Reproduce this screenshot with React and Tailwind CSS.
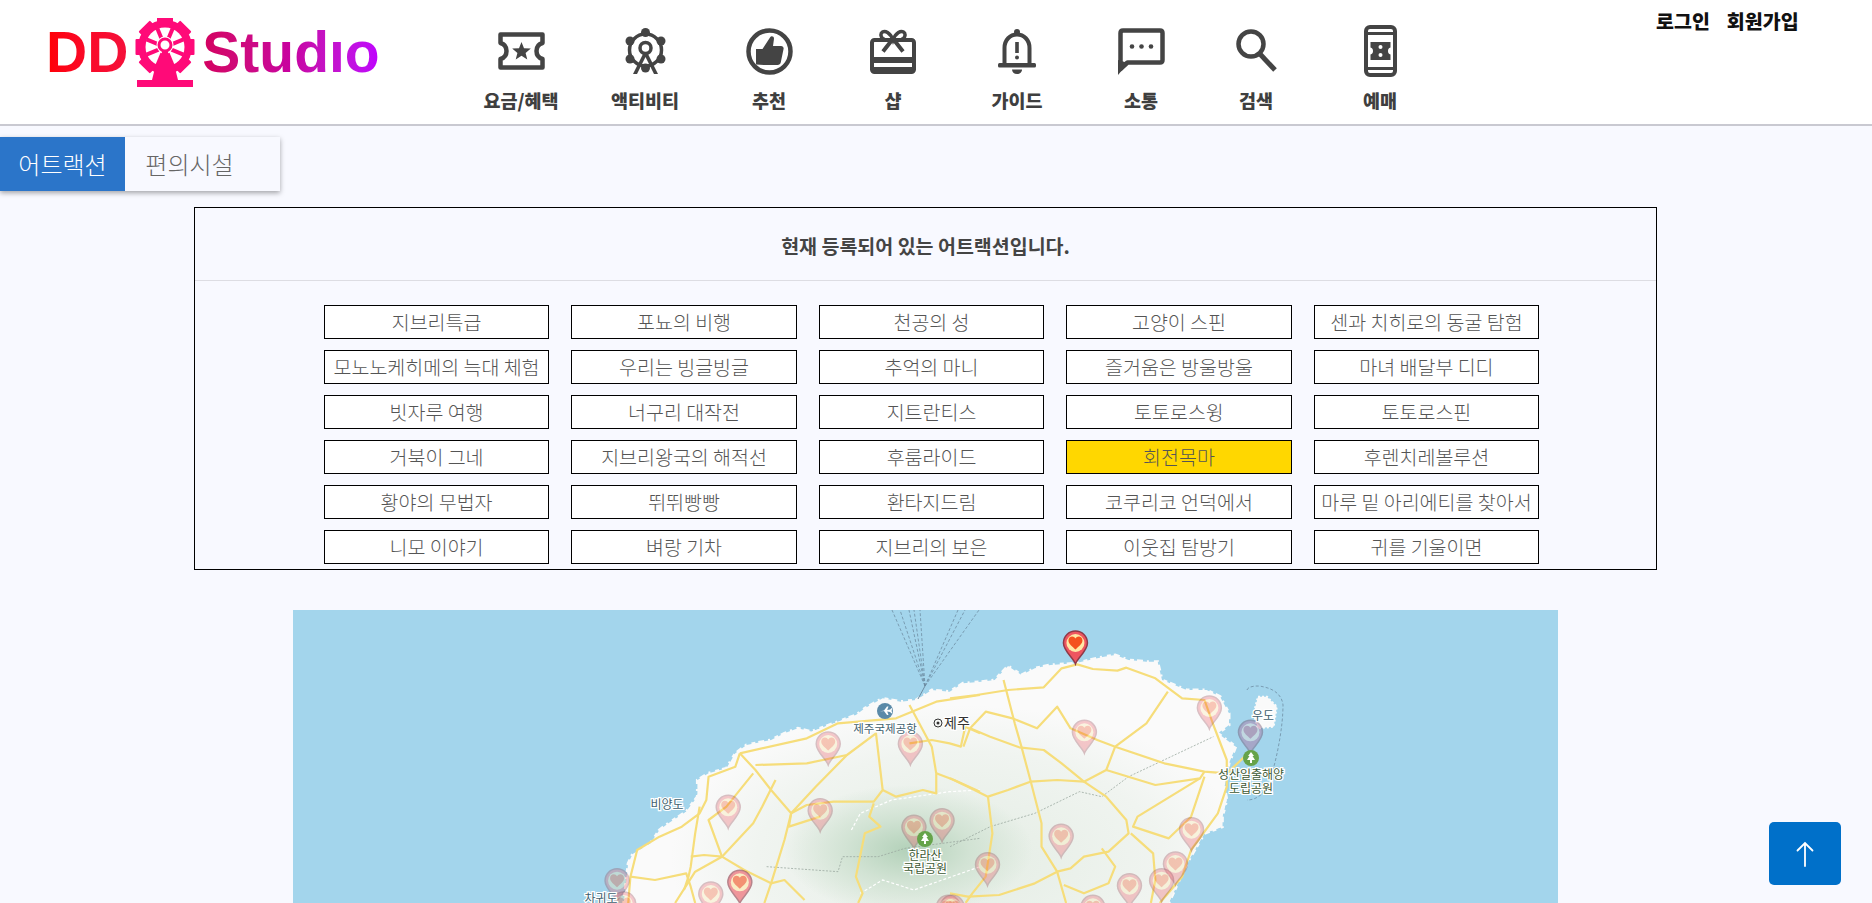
import React from 'react';

const KR = 'font-["Noto_Sans_CJK_KR","Noto_Sans",sans-serif]';

const ICON = '#444444';

const TicketIcon = () => (
    <svg width="47" height="38" viewBox="0 0 47 38">
        <path d="M2.500 2.500h42v8.500c-4 1.200-6 4.500-6 8s2 6.800 6 8v8.500h-42v-8.500c4-1.200 6-4.500 6-8s-2-6.800-6-8z" fill="none" stroke={ICON} strokeWidth="4.500" strokeLinejoin="round" />
        <path d="M23.500 10l2.500 6.200 6.800.4-5.200 4.300 1.700 6.600-5.800-3.700-5.800 3.700 1.700-6.600-5.200-4.300 6.800-.4z" fill={ICON} />
    </svg>
);

const WheelIcon = () => (
    <svg width="43" height="46" viewBox="0 0 43 46">
        <circle cx="21.500" cy="22" r="16" fill="none" stroke={ICON} strokeWidth="3.500" />
        {[[21.500, 4.500], [37, 13], [37, 31], [21.500, 40], [6, 31], [6, 13]].map(([x, y]) => (
            <circle key={x + '-' + y} cx={x} cy={y} r="4.500" fill={ICON} />
        ))}
        <circle cx="21.500" cy="20" r="5.500" fill="none" stroke={ICON} strokeWidth="3.500" />
        <path d="M19 26L9 46h4l8.500-17L30 46h4L24 26z" fill={ICON} />
    </svg>
);

const ThumbIcon = () => (
    <svg width="47" height="47" viewBox="0 0 47 47">
        <circle cx="23.500" cy="23.500" r="21" fill="none" stroke={ICON} strokeWidth="4.500" />
        <path d="M10 21h6.500L24 9.500c1.200-2 4-1.200 4 1.200L27 18h8c2 0 3 1.500 2.500 3.200l-2.700 13c-.4 1.800-1.500 2.800-3.300 2.800H18l-8-.5z" fill={ICON} />
    </svg>
);

const GiftIcon = () => (
    <svg width="46" height="45" viewBox="0 0 46 45">
        <rect x="2" y="11" width="42" height="32" rx="2.500" fill="none" stroke={ICON} strokeWidth="4" />
        <rect x="2" y="28" width="42" height="6" fill={ICON} />
        <rect x="2" y="38" width="42" height="6" rx="2" fill={ICON} />
        <path d="M23 11c-3-8-8-9.500-10.500-8s-2 6 2 7.500L23 12c3.500-1 6-1 8.500-1.500 4-1.500 4.500-6 2-7.500S26 3 23 11z" fill="none" stroke={ICON} strokeWidth="3.500" />
        <path d="M22 11l-9 11.500M24 11l9 11.500" stroke={ICON} strokeWidth="4" />
    </svg>
);

const BellIcon = () => (
    <svg width="38" height="47" viewBox="0 0 38 47">
        <circle cx="19" cy="4" r="3" fill={ICON} />
        <path d="M6.500 36V20C6.500 12 12 6.500 19 6.500S31.500 12 31.500 20v16" fill="none" stroke={ICON} strokeWidth="4" />
        <rect y="35" width="38" height="4.500" rx="1.500" fill={ICON} />
        <rect x="17.200" y="14" width="3.600" height="11" fill={ICON} />
        <circle cx="19" cy="29.500" r="2" fill={ICON} />
        <path d="M14 41.500h10c0 2.500-2 4.500-5 4.500s-5-2-5-4.500z" fill={ICON} />
    </svg>
);

const ChatIcon = () => (
    <svg width="47" height="47" viewBox="0 0 47 47">
        <path d="M2.500 41V5c0-1.500 1-2.500 2.500-2.500h37c1.500 0 2.500 1 2.500 2.500v27c0 1.500-1 2.500-2.500 2.500H9.500z" fill="none" stroke={ICON} strokeWidth="4.500" strokeLinejoin="round" />
        <path d="M0 47V32l10 3z" fill={ICON} />
        <circle cx="14" cy="18.500" r="2.300" fill={ICON} />
        <circle cx="23.500" cy="18.500" r="2.300" fill={ICON} />
        <circle cx="33" cy="18.500" r="2.300" fill={ICON} />
    </svg>
);

const SearchIcon = () => (
    <svg width="41" height="44" viewBox="0 0 41 44">
        <circle cx="15" cy="15" r="12.500" fill="none" stroke={ICON} strokeWidth="4.500" />
        <path d="M24 25l15 16" stroke={ICON} strokeWidth="5" />
    </svg>
);

const PhoneIcon = () => (
    <svg width="33" height="52" viewBox="0 0 33 52">
        <rect x="2" y="2" width="29" height="48" rx="4" fill="none" stroke={ICON} strokeWidth="4" />
        <rect x="2" y="7" width="29" height="3" fill={ICON} />
        <rect x="2" y="42" width="29" height="3" fill={ICON} />
        <path d="M6.500 17h20v5.500c-1.800.5-2.500 1.800-2.500 3.500s.7 3 2.500 3.500V35h-20v-5.500C8.300 29 9 27.700 9 26s-.7-3-2.500-3.500z" fill={ICON} />
        <circle cx="16.500" cy="22" r="2" fill="#ffffff" />
        <circle cx="16.500" cy="30" r="2" fill="#ffffff" />
    </svg>
);

const LOGO_ANGLES = [0, 45, 90, 135, 180, 225, 270, 315];

const LogoWheel = () => (
    <svg width="66" height="69" viewBox="0 0 66 69" className="shrink-0">
        <circle cx="33" cy="29" r="27" fill="#ff0a78" />
        {LOGO_ANGLES.map((deg) => (
            <rect key={deg} x="25" y="-0.500" width="16" height="10" rx="1" fill="#ff0a78" transform={`rotate(${deg} 33 29)`} />
        ))}
        <circle cx="33" cy="29" r="19.500" fill="#ffffff" />
        {LOGO_ANGLES.map((deg) => (
            <path key={deg} d="M33 9v13" stroke="#ff0a78" strokeWidth="4" transform={`rotate(${deg + 22.500} 33 29)`} />
        ))}
        <circle cx="33" cy="27" r="8.500" fill="#ffffff" />
        <circle cx="33" cy="27" r="6" fill="none" stroke="#ff0a78" strokeWidth="3" />
        <path d="M31 32h4l8 18 3 12H20l3-12z" fill="#ff0a78" />
        <rect x="5" y="62" width="56" height="7" fill="#ff0a78" />
    </svg>
);

const NAV = [
    { label: '요금/혜택', Icon: TicketIcon, width: 'w-[124px]' },
    { label: '액티비티', Icon: WheelIcon, width: 'w-[124px]' },
    { label: '추천', Icon: ThumbIcon, width: 'w-[124px]' },
    { label: '샵', Icon: GiftIcon, width: 'w-[124px]' },
    { label: '가이드', Icon: BellIcon, width: 'w-[124px]' },
    { label: '소통', Icon: ChatIcon, width: 'w-[124px]' },
    { label: '검색', Icon: SearchIcon, width: 'w-[106px]' },
    { label: '예매', Icon: PhoneIcon, width: 'w-[142px]' },
];

const ATTRACTIONS = [
    '지브리특급', '포뇨의 비행', '천공의 성', '고양이 스핀', '센과 치히로의 동굴 탐험',
    '모노노케히메의 늑대 체험', '우리는 빙글빙글', '추억의 마니', '즐거움은 방울방울', '마녀 배달부 디디',
    '빗자루 여행', '너구리 대작전', '지트란티스', '토토로스윙', '토토로스핀',
    '거북이 그네', '지브리왕국의 해적선', '후룸라이드', '회전목마', '후렌치레볼루션',
    '황야의 무법자', '뛰뛰빵빵', '환타지드림', '코쿠리코 언덕에서', '마루 밑 아리에티를 찾아서',
    '니모 이야기', '벼랑 기차', '지브리의 보은', '이웃집 탐방기', '귀를 기울이면',
];

// map points are read off two crops of the picture, so convert them to page space
const a = ([x, y]) => [280 + x / 2.24, 600 + y / 3];
const b = ([x, y]) => [950 + x / 2.24, 600 + y / 3];
const line = (pts) => pts.map((p) => p.join(',')).join(' ');

const LAND = [
    ...[[770, 909], [780, 790], [790, 762], [830, 730], [850, 690], [870, 670], [910, 635], [935, 590], [935, 540], [960, 520], [1000, 505], [1020, 460], [1045, 435], [1100, 420], [1130, 400], [1160, 385], [1190, 395], [1250, 365], [1290, 345], [1310, 325], [1350, 295], [1390, 305], [1425, 300], [1460, 270], [1500, 275], [1530, 250]].map(a),
    ...[[70, 245], [100, 240], [130, 198], [160, 225], [190, 205], [225, 195], [280, 190], [345, 170], [370, 165], [400, 180], [440, 185], [465, 185], [475, 240], [530, 270], [575, 270], [605, 290], [625, 340], [625, 375], [600, 400], [640, 440], [625, 490], [615, 560], [620, 600], [610, 650], [610, 680], [570, 700], [535, 780], [510, 850], [500, 880], [490, 909]].map(b),
];

const UDO = [[690, 290], [710, 290], [732, 320], [725, 380], [690, 385], [680, 340]].map(b);

const ROADS = [
    [[1030, 460], [1180, 415], [1250, 370], [1380, 355], [1470, 305], [1568, 285]].map(a),
    [[1030, 460], [1065, 510], [1100, 570], [1145, 640], [1130, 720], [1100, 850], [1085, 909]].map(a),
    [[1065, 495], [1180, 490], [1270, 465], [1335, 400], [1350, 570], [1330, 605], [1240, 605], [1180, 615], [1145, 640], [1140, 680], [1210, 650]].map(a),
    [[1270, 465], [1200, 560], [1145, 640]].map(a),
    [[1060, 520], [1000, 620], [960, 660], [990, 770], [1040, 810], [1100, 850], [1130, 840], [1175, 900]].map(a),
    [[1110, 540], [1080, 620], [1060, 670], [990, 770], [930, 815], [885, 909]].map(a),
    [[940, 620], [930, 700], [920, 800], [915, 830], [905, 870]].map(a),
    [[920, 770], [950, 765], [990, 770]].map(a),
    [[1030, 460], [1020, 500], [960, 530], [955, 600], [940, 640], [900, 680], [850, 710], [800, 750], [785, 830], [780, 909]].map(a),
    [[785, 830], [840, 840], [910, 820], [920, 860], [930, 909]].map(a),
    [[1350, 570], [1380, 590], [1440, 570], [1470, 580], [1470, 520], [1460, 440], [1410, 315]].map(a),
    [[1470, 520], [1510, 540], [1568, 575]].map(a),
    [[1330, 610], [1320, 650], [1345, 680], [1310, 700], [1290, 830], [1305, 880], [1295, 909]].map(a),
    [[1410, 430], [1460, 420], [1500, 430], [1525, 440], [1535, 380], [1568, 400]].map(a),
    [[0, 295], [60, 285], [130, 270], [210, 262], [250, 205], [285, 193], [320, 207], [375, 212], [395, 203], [460, 235], [520, 295], [570, 300], [590, 375], [620, 480], [620, 560], [600, 640], [540, 750], [520, 830], [470, 909]].map(b),
    [[0, 535], [40, 560], [85, 590], [130, 570], [180, 545], [240, 540], [300, 545], [350, 510], [370, 440]].map(b),
    [[120, 240], [145, 370], [160, 440], [180, 540], [205, 670], [205, 740], [240, 815], [260, 909]].map(b),
    [[85, 590], [95, 700], [80, 830], [50, 880], [35, 909]].map(b),
    [[45, 385], [90, 410], [155, 442], [210, 450], [250, 490], [300, 545], [350, 590], [395, 660], [400, 700], [355, 755], [300, 770], [270, 805], [240, 815], [190, 850], [110, 885], [40, 890], [0, 880]].map(b),
    [[30, 440], [45, 385], [80, 335], [140, 355], [195, 385], [240, 320], [270, 385], [330, 420], [370, 440], [480, 490], [570, 515], [620, 520], [660, 470]].map(b),
    [[370, 440], [440, 370], [488, 275]].map(b),
    [[350, 510], [460, 555], [560, 535], [570, 515]].map(b),
    [[560, 535], [420, 650], [410, 680], [490, 715], [540, 650], [570, 530]].map(b),
    [[405, 700], [455, 760], [460, 840], [450, 909]].map(b),
    [[340, 745], [370, 800], [355, 850], [300, 880], [255, 855]].map(b),
];

const TRAILS = [
    [[1090, 800], [1250, 815], [1260, 770], [1340, 770], [1400, 745], [1568, 715]].map(a),
    [[0, 740], [90, 680], [190, 640], [290, 575], [340, 590], [400, 530], [590, 410]].map(b),
];

const PARK = [
    [[1300, 880], [1350, 840], [1420, 870], [1568, 800]].map(a),
    [[1280, 690], [1300, 640], [1370, 600], [1500, 575], [1568, 570]].map(a),
];

const FERRY = [892, 900, 909, 914, 920, 958, 965, 979].map((x) => [[925, 686], [x, 610]]);

const PINS = [
    ...[[1228, 495], [1412, 495], [1004, 685], [1210, 695], [1420, 745], [1483, 725], [755, 905], [770, 975], [965, 945], [1497, 985]].map(a),
    ...[[301, 460], [581, 387], [249, 772], [541, 752], [505, 855], [84, 857], [402, 920], [474, 905], [320, 985], [5, 985]].map(b),
];

const Pin = ({ at: [x, y], className = 'opacity-30' }) => (
    <g transform={`translate(${x} ${y})`} className={className}>
        <path d="M0 0C-2-6-12-13-12-21A12 12 0 1 1 12-21C12-13 2-6 0 0Z" fill="#ee5560" stroke="#8f3a48" strokeWidth="1.500" />
        <circle cy="-21" r="9" fill="#ffe8a6" />
        <path d="M0-14.500C-3-17.500-7-20-7-23.500c0-2.500 1.800-4 3.700-4 1.500 0 2.500.8 3.300 2 .8-1.200 1.800-2 3.300-2 1.900 0 3.700 1.500 3.700 4 0 3.500-4 6-7 9z" fill="#f4511e" />
    </g>
);

const Tree = ({ x, y }) => (
    <g transform={`translate(${x} ${y})`}>
        <circle r="8" fill="#66a34a" />
        <path d="M0-6l3 4H1.500l2.500 4H1v3H-1V2H-4l2.500-4H-3z" fill="#ffffff" />
    </g>
);

const MapLabel = ({ x, y, size = 12, fill = '#3f5f6e', children }) => (
    <text
        x={x}
        y={y}
        fontSize={size}
        fill={fill}
        textAnchor="middle"
        stroke="#ffffff"
        strokeWidth="2.500"
        className={`${KR} [paint-order:stroke]`}
    >
        {children}
    </text>
);

const JejuMap = () => (
    <svg viewBox="293 610 1265 293" className="block h-[293px] w-[1265px]">
        <defs>
            <radialGradient id="plain">
                <stop offset="0%" stopColor="#e4ede4" />
                <stop offset="70%" stopColor="#f0f4f0" />
                <stop offset="100%" stopColor="#fafafa" />
            </radialGradient>
            <radialGradient id="peak">
                <stop offset="0%" stopColor="#b3d1b9" />
                <stop offset="50%" stopColor="#d2e3d4" />
                <stop offset="100%" stopColor="#d2e3d4" stopOpacity="0" />
            </radialGradient>
            <clipPath id="island">
                <polygon points={line(LAND)} />
            </clipPath>
        </defs>
        <rect x="293" y="610" width="1265" height="293" fill="#a3d5ec" />
        <polygon points={line(LAND)} fill="#fafafa" stroke="#fafafa" strokeWidth="3" strokeDasharray="2 5 4 3 6 4" />
        <polygon points={line(UDO)} fill="#fafafa" stroke="#fafafa" strokeWidth="2" strokeDasharray="2 2" />
        <g clipPath="url(#island)">
            <ellipse cx="960" cy="860" rx="290" ry="155" fill="url(#plain)" />
            <ellipse cx="908" cy="850" rx="125" ry="65" fill="url(#peak)" />
        </g>
        {FERRY.map((pts) => (
            <polyline key={pts[1][0]} points={line(pts)} fill="none" stroke="#6f8ea3" strokeWidth="0.800" strokeDasharray="3 2" />
        ))}
        <path d="M925 686l-7 13" stroke="#6f8ea3" strokeWidth="1" />
        <path d="M1247 690C1248 686 1258 685 1264 687C1274 689 1282 695 1283 705C1283 725 1278 755 1270 780C1266 792 1258 800 1247 800" fill="none" stroke="#6f8ea3" strokeWidth="0.800" strokeDasharray="3 2" />
        {TRAILS.map((pts, i) => (
            <polyline key={i} points={line(pts)} fill="none" stroke="#9aa8a0" strokeWidth="0.800" strokeDasharray="2 1.500" />
        ))}
        {PARK.map((pts, i) => (
            <polyline key={i} points={line(pts)} fill="none" stroke="#ffffff" strokeWidth="1.200" strokeDasharray="3 2" />
        ))}
        {ROADS.map((pts, i) => (
            <polyline key={i} points={line(pts)} fill="none" stroke="#f6dd7a" strokeWidth="2.200" strokeLinejoin="round" />
        ))}
        {PINS.map((p) => (
            <Pin key={p.join('-')} at={p} />
        ))}
        <Pin at={b([673, 460])} className="opacity-40 saturate-50 hue-rotate-[-40deg]" />
        <Pin at={a([1030, 910])} className="opacity-60" />
        <Pin at={b([281, 192])} className="opacity-100" />
        <circle cx="885" cy="711" r="8" fill="#5b8aa8" />
        <path d="M880 711.500l4-1 3-4h1.500l-1.300 3.500 3-.5 1-1.300h1l-.6 2.500.6 2.500h-1l-1-1.200-3-.5 1.300 3.500H887l-3-4z" fill="#ffffff" />
        <MapLabel x={885} y={733} size={11.500}>제주국제공항</MapLabel>
        <circle cx="938" cy="723" r="4" fill="none" stroke="#333333" strokeWidth="1" />
        <circle cx="938" cy="723" r="1.500" fill="#333333" />
        <MapLabel x={957} y={728} size={14} fill="#333333">제주</MapLabel>
        <MapLabel x={667} y={809} size={12}>비양도</MapLabel>
        <Tree x={925} y={839} />
        <MapLabel x={925} y={860} size={12} fill="#3d5a33">한라산</MapLabel>
        <MapLabel x={925} y={873} size={12} fill="#3d5a33">국립공원</MapLabel>
        <MapLabel x={601} y={903} size={12}>차귀도</MapLabel>
        <MapLabel x={1263} y={720} size={12}>우도</MapLabel>
        <Tree x={1251} y={758} />
        <MapLabel x={1251} y={779} size={12} fill="#3d5a33">성산일출해양</MapLabel>
        <MapLabel x={1251} y={793} size={12} fill="#3d5a33">도립공원</MapLabel>
    </svg>
);

const Header = () => (
    <header className="relative h-[126px] border-b-2 border-[#c9c9d1] bg-white">
        <div className="flex h-full items-start pl-[46px]">
            <div className="mt-[18px] flex h-[69px] w-[413px] shrink-0 items-start font-['Liberation_Sans',sans-serif] text-[57px] leading-[57px] font-bold">
                <span className="mt-[6px] bg-gradient-to-r from-[#ff0000] to-[#f5103a] bg-clip-text text-transparent">DD</span>
                <span className="ml-[4px]"><LogoWheel /></span>
                <span className="mt-[6px] ml-[4px] bg-gradient-to-r from-[#d4005f] via-[#c800a0] to-[#bf00ff] bg-clip-text text-transparent">Studıo</span>
            </div>
            <nav className="flex">
                {NAV.map(({ label, Icon, width }) => (
                    <div key={label} className={`${width} flex h-[110px] flex-col items-center`}>
                        <div className="flex h-[92px] items-center pt-[15px] pb-[5px]">
                            <Icon />
                        </div>
                        <span className={`${KR} text-[18.500px] leading-[16px] font-black whitespace-nowrap text-[#3f3f3f]`}>{label}</span>
                    </div>
                ))}
            </nav>
        </div>
        <div className={`${KR} absolute top-[12px] left-[1656px] flex gap-[17px] text-[19.500px] leading-[18px] font-black text-[#111111]`}>
            <span>로그인</span>
            <span>회원가입</span>
        </div>
    </header>
);

export default function App() {
    return (
        <div className={`${KR} h-[903px] overflow-hidden bg-[#f8f9ff]`}>
            <Header />
            <div className="w-[1851px]">
                <div className="mt-[11px] flex h-[54px] w-[280px] shadow-[0_2px_5px_rgba(0,0,0,0.35)]">
                    <div className="flex w-[125px] items-center justify-center bg-[#2b75c9] text-[24px] font-light text-white">어트랙션</div>
                    <div className="flex flex-1 items-center justify-center pr-[26px] text-[24px] font-light text-[#666666]">편의시설</div>
                </div>
                <section className="mx-auto mt-[16px] h-[363px] w-[1463px] border border-black">
                    <h2 className="flex h-[73px] items-center justify-center border-b border-[#dddde3] pt-[3px] text-[19.500px] font-bold text-[#444444]">
                        현재 등록되어 있는 어트랙션입니다.
                    </h2>
                    <ul className="grid w-[1215px] translate-x-[129px] grid-cols-5 gap-x-[22.400px] gap-y-[11px] pt-[24px]">
                        {ATTRACTIONS.map((name) => (
                            <li
                                key={name}
                                className={`flex h-[34px] items-center justify-center border border-black text-[19.500px] font-light whitespace-nowrap text-[#555555] ${name === '회전목마' ? 'bg-[#ffd700]' : 'bg-white'}`}
                            >
                                {name}
                            </li>
                        ))}
                    </ul>
                </section>
                <div className="mx-auto mt-[40px] w-[1265px]">
                    <JejuMap />
                </div>
            </div>
            <button className="fixed top-[822px] left-[1769px] flex h-[63px] w-[72px] items-center justify-center rounded-[5px] bg-[#0070c9]">
                <svg width="18" height="26" viewBox="0 0 18 26">
                    <path d="M9 25V2M1.500 9.500L9 2l7.500 7.500" fill="none" stroke="#ffffff" strokeWidth="1.800" strokeLinecap="round" />
                </svg>
            </button>
        </div>
    );
}
